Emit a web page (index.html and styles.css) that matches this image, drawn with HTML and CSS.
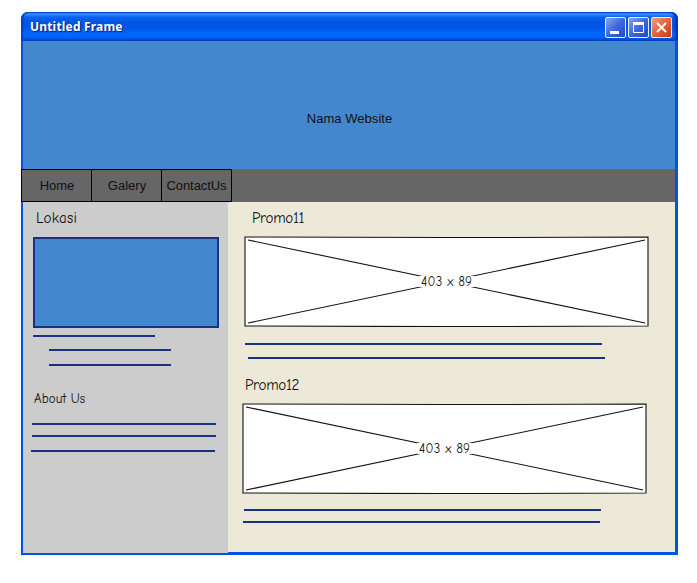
FILE: index.html
```html
<!DOCTYPE html>
<html lang="en">
<head>
<meta charset="utf-8">
<title>Untitled Frame</title>
<link rel="stylesheet" href="styles.css">
</head>
<body>
<div class="window">
  <header class="titlebar">
    <span class="title">Untitled Frame</span>
    <div class="controls">
      <svg class="control" viewBox="0 0 21 21"><defs><linearGradient id="blue" x2="1" y2="1"><stop offset="0" stop-color="#8ba9f2"/><stop offset=".5" stop-color="#3e68dc"/><stop offset="1" stop-color="#1d48c4"/></linearGradient></defs><rect x=".5" y=".5" width="20" height="20" rx="1.5" fill="url(#blue)" stroke="#e4ebfb"/><path d="M5 15.5h9" stroke="#fff" stroke-width="3"/></svg>
      <svg class="control" viewBox="0 0 21 21"><rect x=".5" y=".5" width="20" height="20" rx="1.5" fill="url(#blue)" stroke="#e4ebfb"/><path d="M5.5 6v9.5h10V6" fill="none" stroke="#fff"/><path d="M5 6.500h11" stroke="#fff" stroke-width="3"/></svg>
      <svg class="control" viewBox="0 0 21 21"><defs><linearGradient id="red" x2="1" y2="1"><stop offset="0" stop-color="#f0a088"/><stop offset=".5" stop-color="#e4633c"/><stop offset="1" stop-color="#c9370b"/></linearGradient></defs><rect x=".5" y=".5" width="20" height="20" rx="1.5" fill="url(#red)" stroke="#fbeae4"/><path d="M6 6l9 9M15 6l-9 9" stroke="#fff" stroke-width="2"/></svg>
    </div>
  </header>
  <div class="page">
    <div class="banner"><span>Nama Website</span></div>
    <nav class="nav">
      <a class="tab">Home</a><a class="tab">Galery</a><a class="tab tab-contact">ContactUs</a>
    </nav>
    <div class="columns">
      <aside class="sidebar">
        <h2 class="heading lokasi">Lokasi</h2>
        <div class="map"></div>
        <div class="rules place-rules"><i></i><i></i><i></i></div>
        <h2 class="heading about">About Us</h2>
        <div class="rules about-rules"><i></i><i></i><i></i></div>
      </aside>
      <main class="main">
        <section class="promo promo-first">
          <h2 class="heading promo-title">Promo11</h2>
          <svg class="picture" viewBox="0 0 405 91"><path class="frame" d="M1 1Q202 2 404 1V90Q202 91 1 90Z"/><path class="cross" d="M4 4L401 87M4 87L401 4"/><rect class="label-bg" x="175" y="40" width="55" height="11"/><text class="label" x="177" y="50" textLength="51">403 x 89</text></svg>
          <div class="rules"><i></i><i></i></div>
        </section>
        <section class="promo promo-second">
          <h2 class="heading promo-title">Promo12</h2>
          <svg class="picture" viewBox="0 0 405 91"><path class="frame" d="M1 1Q202 2 404 1V90Q202 91 1 90Z"/><path class="cross" d="M4 4L401 87M4 87L401 4"/><rect class="label-bg" x="175" y="40" width="55" height="11"/><text class="label" x="177" y="50" textLength="51">403 x 89</text></svg>
          <div class="rules"><i></i><i></i></div>
        </section>
      </main>
    </div>
  </div>
</div>
</body>
</html>
```
FILE: styles.css
```css
* { box-sizing: border-box; }
body { margin: 0; background: #fff; color: #111; }
.window { width: 657px; height: 543px; margin: 12px 0 0 21px; background: #0054e3; border-radius: 7px 7px 0 0; }
.titlebar {
  height: 29px; padding: 5px 6px 0 9px; display: flex; justify-content: space-between;
  border-radius: 7px 7px 0 0;
  background: linear-gradient(#0a4fcf 0, #3a92fc 2px, #0a64f0 5px, #0054e3 10px, #0056e8 16px, #0066fb 21px, #0066fb 25px, #0050dc 27px, #003fc0 29px);
  box-shadow: inset 2px 0 2px #0040c4, inset -3px 0 2px #0038b8;
}
.title { font: bold 12px/20px "Noto Sans", sans-serif; letter-spacing: .18px; color: #fff; text-shadow: 1px 1px 1px #0a1883; }
.controls { display: flex; gap: 2px; }
.control { width: 21px; height: 21px; display: block; }
.page { padding: 0 3px 0 2px; height: 514px; }
.banner { height: 128px; background: #4388ce; display: flex; justify-content: center; padding: 69px 0 0 1px; font: 13px/18px "Liberation Sans", Arial, sans-serif; letter-spacing: .05px; }
.nav { height: 33px; background: #666; display: flex; }
.tab { width: 71px; height: 33px; border: 1px solid #000; margin-right: -1px; padding-left: 1px; text-align: center; font: 13px/31px "Liberation Sans", Arial, sans-serif; letter-spacing: 0; white-space: nowrap; background: #666; }
.tab-contact { letter-spacing: -.08px; padding-left: 0; }
.tab:first-child { margin-left: -2px; }
.columns { display: flex; align-items: flex-start; }
.sidebar { width: 205px; height: 351px; background: #ccc; }
.main { width: 447px; height: 350px; background: #ece9d8; }
.heading { margin: 0; font: 15px/20px "Comic Sans MS", "Comic Neue", "Open Sans", sans-serif; white-space: nowrap; }
.lokasi { padding: 6px 0 0 13px; height: 35px; letter-spacing: .3px; }
.map { width: 186px; height: 91px; margin-left: 10px; border: 2px solid #1a3182; background: #4388ce; }
.rules i { display: block; height: 2px; background: #1a3182; }
.place-rules { padding: 7px 0 0 10px; }
.place-rules i { width: 122px; margin-left: 16px; }
.place-rules i:first-child { margin: 0 0 12px; }
.place-rules i:last-child { margin-top: 13px; }
.about { padding: 23px 0 0 11px; height: 57px; font-size: 13px; letter-spacing: .1px; }
.about-rules { padding-left: 8px; }
.about-rules i { width: 184px; margin: 0 0 10px 1px; }
.about-rules i:last-child { margin: 13px 0 0; }
.promo-title { height: 34px; padding: 6px 0 0 24px; letter-spacing: -.3px; }
.picture { display: block; width: 405px; height: 91px; margin-left: 16px; }
.frame { fill: #fff; stroke: #111; stroke-width: 1.1; }
.cross { stroke: #111; stroke-width: 1.1; }
.label-bg { fill: #fff; }
.label { font: 13px "Comic Sans MS", "Comic Neue", "Open Sans", sans-serif; fill: #111; }
.promo .rules { padding: 16px 0 0 17px; }
.promo .rules i { width: 357px; }
.promo .rules i:last-child { margin: 12px 0 0 3px; }
.promo-second .promo-title { padding: 16px 0 0 17px; height: 44px; }
.promo-second .picture { margin-left: 14px; }
.promo-second .rules { padding: 15px 0 0 16px; }
.promo-second .rules i:last-child { margin: 10px 0 0 -1px; }
```
